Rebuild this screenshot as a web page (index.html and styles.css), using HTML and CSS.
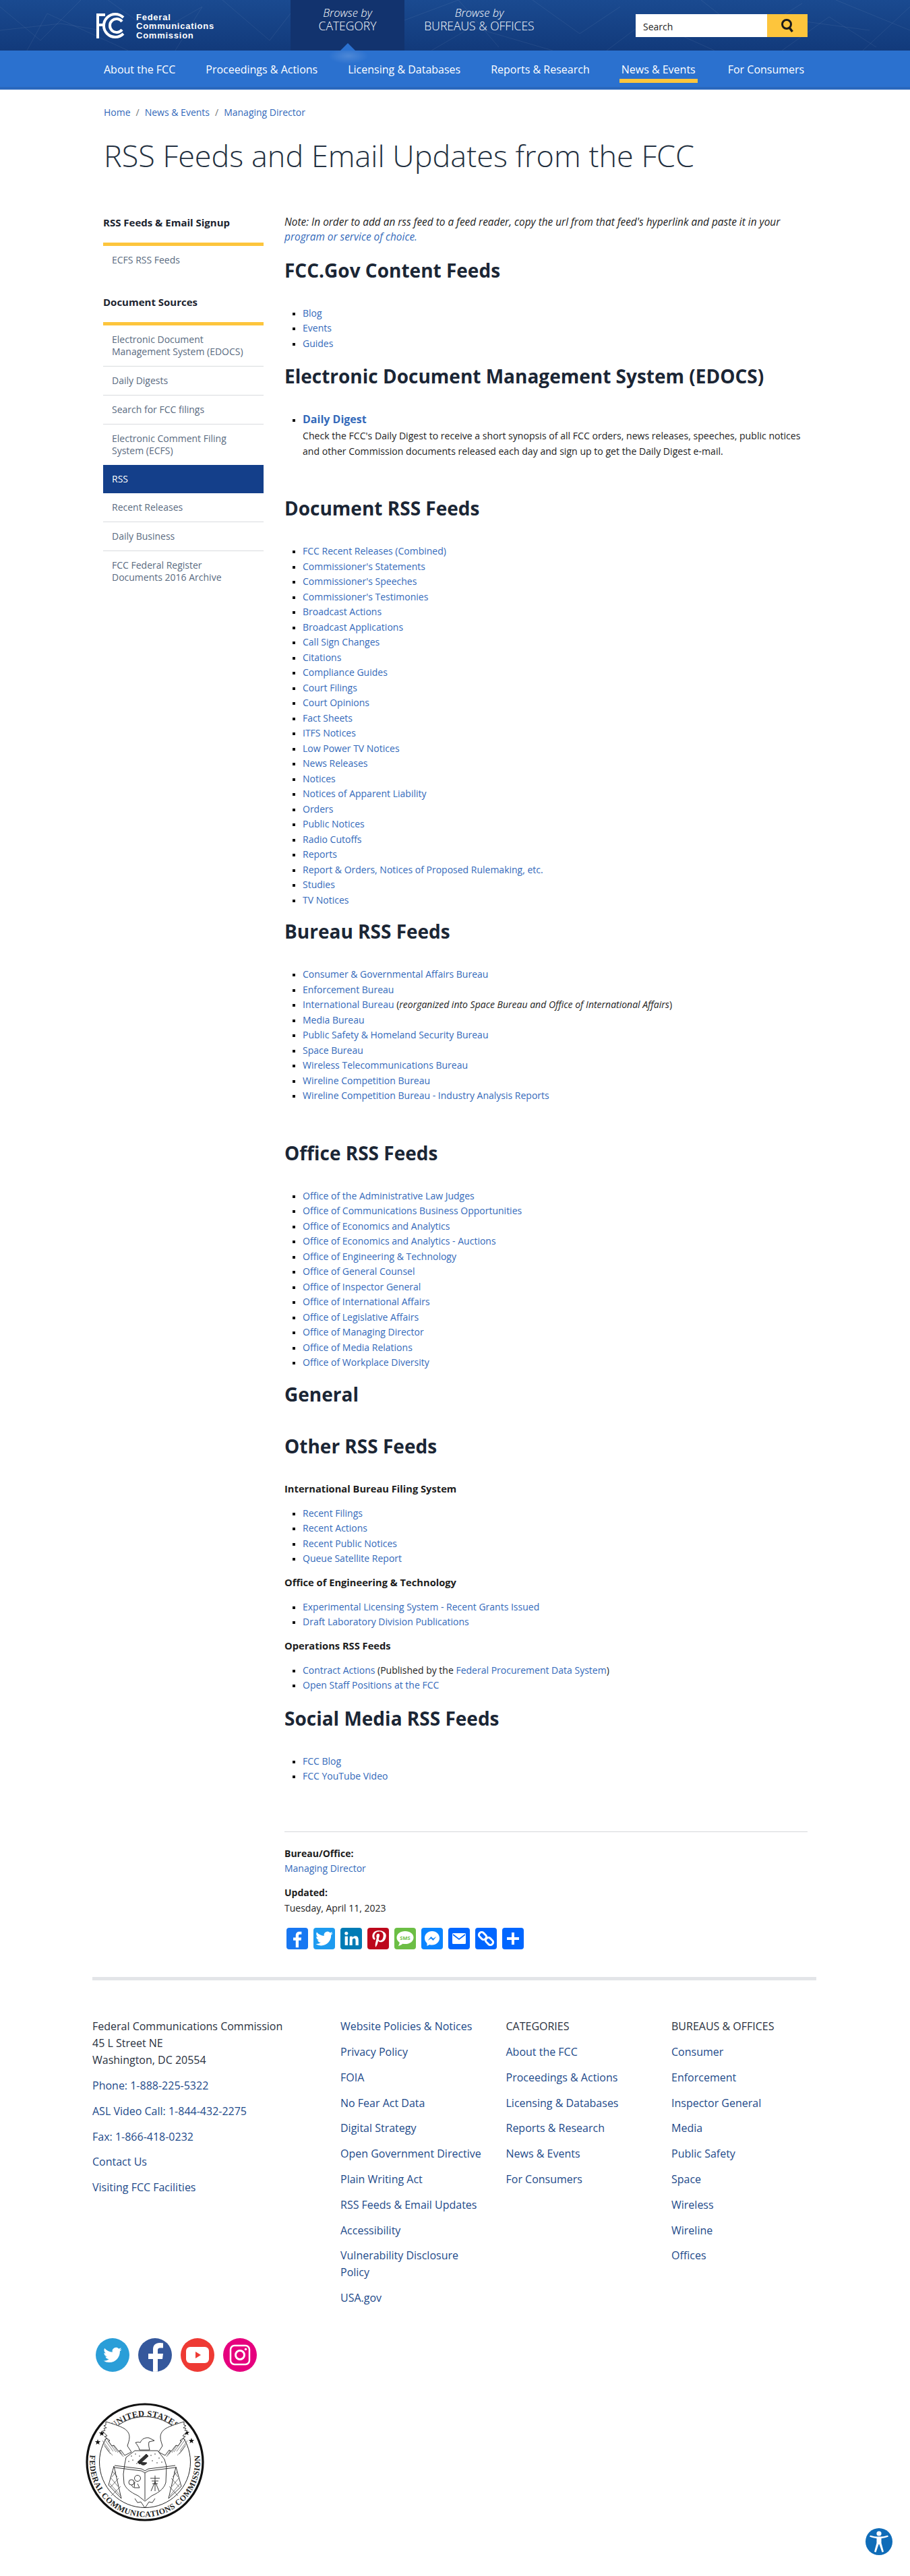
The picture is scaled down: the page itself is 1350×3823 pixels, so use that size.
FILE: index.html

```html
<!DOCTYPE html>
<html lang="en">
<head>
    <meta charset="UTF-8">
    <title>RSS Feeds and Email Updates from the FCC</title>
    <link rel="stylesheet" href="styles.css">
</head>
<body>

<svg class="defs" width="0" height="0">
    <symbol id="i-tw" viewBox="0 0 24 24"><path fill="#fff" d="M23.953 4.57a10 10 0 01-2.825.775 4.958 4.958 0 002.163-2.723c-.951.555-2.005.959-3.127 1.184a4.92 4.92 0 00-8.384 4.482C7.69 8.095 4.067 6.13 1.64 3.162a4.822 4.822 0 00-.666 2.475c0 1.71.87 3.213 2.188 4.096a4.904 4.904 0 01-2.228-.616v.06a4.923 4.923 0 003.946 4.827 4.996 4.996 0 01-2.212.085 4.936 4.936 0 004.604 3.417 9.867 9.867 0 01-6.102 2.105c-.39 0-.779-.023-1.17-.067a13.995 13.995 0 007.557 2.209c9.053 0 13.998-7.496 13.998-13.985 0-.21 0-.42-.015-.63A9.935 9.935 0 0024 4.59z"/></symbol>
</svg>

<header class="site-header">
    <svg class="mesh" viewBox="0 0 1350 75" preserveAspectRatio="none">
        <path d="M0 10L60 60L120 0M40 75L70 20L190 75M160 0L230 50L300 10L260 75M330 0L400 60L431 20M600 30L680 0L740 70M640 75L700 40L820 75M790 0L860 50L920 10M900 75L960 30L1060 75M1040 0L1110 55L1190 5M1160 75L1230 25L1300 70M1240 0L1350 45M1280 75L1350 10M0 45L90 35L180 50M1060 40L1180 30L1290 45"/>
    </svg>
    <div class="header-row">
        <a class="logo" href="#">
            <svg class="logo-mark" viewBox="0 0 46 38">
                <path d="M0 38V1H13V5H4V16H12V20H4V38z" fill="#fff"/>
                <path d="M40 7A17 17 0 1 0 40 31" fill="none" stroke="#fff" stroke-width="4"/>
                <path d="M38 13A10 10 0 1 0 38 25" fill="none" stroke="#fff" stroke-width="4"/>
            </svg>
            <span class="logo-text">Federal<br>Communications<br>Commission</span>
        </a>
        <a class="browse-tab active" href="#"><em>Browse by</em>CATEGORY</a>
        <a class="browse-tab" href="#"><em>Browse by</em>BUREAUS &amp; OFFICES</a>
        <form class="search">
            <input type="text" placeholder="Search">
            <button type="button" aria-label="Search">
                <svg width="22" height="22" viewBox="0 0 22 22"><circle cx="10" cy="9" r="6.5" fill="none" stroke="#1b1b1b" stroke-width="3"/><path d="M14 14L18.5 20" stroke="#1b1b1b" stroke-width="3.4"/></svg>
            </button>
        </form>
    </div>
</header>

<nav class="main-nav">
    <span class="nav-glow"></span>
    <a href="#">About the FCC</a>
    <a href="#">Proceedings &amp; Actions</a>
    <a href="#">Licensing &amp; Databases</a>
    <a href="#">Reports &amp; Research</a>
    <a href="#" class="current">News &amp; Events</a>
    <a href="#">For Consumers</a>
</nav>

<div class="breadcrumb"><a href="#">Home</a><i>/</i><a href="#">News &amp; Events</a><i>/</i><a href="#">Managing Director</a></div>
<h1>RSS Feeds and Email Updates from the FCC</h1>

<div class="columns">
    <aside class="sidebar">
        <h4>RSS Feeds &amp; Email Signup</h4>
        <ul class="side-menu first">
            <li><a href="#">ECFS RSS Feeds</a></li>
        </ul>
        <h4>Document Sources</h4>
        <ul class="side-menu">
            <li><a href="#">Electronic Document Management System (EDOCS)</a></li>
            <li><a href="#">Daily Digests</a></li>
            <li><a href="#">Search for FCC filings</a></li>
            <li class="plain"><a href="#">Electronic Comment Filing System (ECFS)</a></li>
            <li class="active"><a href="#">RSS</a></li>
            <li><a href="#">Recent Releases</a></li>
            <li><a href="#">Daily Business</a></li>
            <li class="plain"><a href="#">FCC Federal Register Documents 2016 Archive</a></li>
        </ul>
    </aside>

    <main class="content">
        <p class="note">Note: In order to add an rss feed to a feed reader, copy the url from that feed's hyperlink and paste it in your <a href="#">program or service of choice.</a></p>

        <h2>FCC.Gov Content Feeds</h2>
        <ul class="feeds">
            <li><a href="#">Blog</a></li>
            <li><a href="#">Events</a></li>
            <li><a href="#">Guides</a></li>
        </ul>

        <h2>Electronic Document Management System (EDOCS)</h2>
        <ul class="feeds digest">
            <li><a href="#" class="digest-link">Daily Digest</a>
                <p>Check the FCC's Daily Digest to receive a short synopsis of all FCC orders, news releases, speeches, public notices and other Commission documents released each day and sign up to get the Daily Digest e-mail.</p>
            </li>
        </ul>

        <h2 class="gap-xl">Document RSS Feeds</h2>
        <ul class="feeds">
            <li><a href="#">FCC Recent Releases (Combined)</a></li>
            <li><a href="#">Commissioner's Statements</a></li>
            <li><a href="#">Commissioner's Speeches</a></li>
            <li><a href="#">Commissioner's Testimonies</a></li>
            <li><a href="#">Broadcast Actions</a></li>
            <li><a href="#">Broadcast Applications</a></li>
            <li><a href="#">Call Sign Changes</a></li>
            <li><a href="#">Citations</a></li>
            <li><a href="#">Compliance Guides</a></li>
            <li><a href="#">Court Filings</a></li>
            <li><a href="#">Court Opinions</a></li>
            <li><a href="#">Fact Sheets</a></li>
            <li><a href="#">ITFS Notices</a></li>
            <li><a href="#">Low Power TV Notices</a></li>
            <li><a href="#">News Releases</a></li>
            <li><a href="#">Notices</a></li>
            <li><a href="#">Notices of Apparent Liability</a></li>
            <li><a href="#">Orders</a></li>
            <li><a href="#">Public Notices</a></li>
            <li><a href="#">Radio Cutoffs</a></li>
            <li><a href="#">Reports</a></li>
            <li><a href="#">Report &amp; Orders, Notices of Proposed Rulemaking, etc.</a></li>
            <li><a href="#">Studies</a></li>
            <li><a href="#">TV Notices</a></li>
        </ul>

        <h2 class="gap-s">Bureau RSS Feeds</h2>
        <ul class="feeds">
            <li><a href="#">Consumer &amp; Governmental Affairs Bureau</a></li>
            <li><a href="#">Enforcement Bureau</a></li>
            <li><a href="#">International Bureau</a> (<em>reorganized into Space Bureau and Office of International Affairs</em>)</li>
            <li><a href="#">Media Bureau</a></li>
            <li><a href="#">Public Safety &amp; Homeland Security Bureau</a></li>
            <li><a href="#">Space Bureau</a></li>
            <li><a href="#">Wireless Telecommunications Bureau</a></li>
            <li><a href="#">Wireline Competition Bureau</a></li>
            <li><a href="#">Wireline Competition Bureau - Industry Analysis Reports</a></li>
        </ul>

        <h2 class="gap-xl">Office RSS Feeds</h2>
        <ul class="feeds">
            <li><a href="#">Office of the Administrative Law Judges</a></li>
            <li><a href="#">Office of Communications Business Opportunities</a></li>
            <li><a href="#">Office of Economics and Analytics</a></li>
            <li><a href="#">Office of Economics and Analytics - Auctions</a></li>
            <li><a href="#">Office of Engineering &amp; Technology</a></li>
            <li><a href="#">Office of General Counsel</a></li>
            <li><a href="#">Office of Inspector General</a></li>
            <li><a href="#">Office of International Affairs</a></li>
            <li><a href="#">Office of Legislative Affairs</a></li>
            <li><a href="#">Office of Managing Director</a></li>
            <li><a href="#">Office of Media Relations</a></li>
            <li><a href="#">Office of Workplace Diversity</a></li>
        </ul>

        <h2 class="gap-s">General</h2>
        <h2 class="gap-l">Other RSS Feeds</h2>

        <h5 class="first-sub">International Bureau Filing System</h5>
        <ul class="feeds tight">
            <li><a href="#">Recent Filings</a></li>
            <li><a href="#">Recent Actions</a></li>
            <li><a href="#">Recent Public Notices</a></li>
            <li><a href="#">Queue Satellite Report</a></li>
        </ul>
        <h5>Office of Engineering &amp; Technology</h5>
        <ul class="feeds tight">
            <li><a href="#">Experimental Licensing System - Recent Grants Issued</a></li>
            <li><a href="#">Draft Laboratory Division Publications</a></li>
        </ul>
        <h5>Operations RSS Feeds</h5>
        <ul class="feeds tight">
            <li><a href="#">Contract Actions</a> (Published by the <a href="#">Federal Procurement Data System</a>)</li>
            <li><a href="#">Open Staff Positions at the FCC</a></li>
        </ul>

        <h2>Social Media RSS Feeds</h2>
        <ul class="feeds">
            <li><a href="#">FCC Blog</a></li>
            <li><a href="#">FCC YouTube Video</a></li>
        </ul>

        <div class="meta">
            <div class="meta-row"><strong>Bureau/Office:</strong><a href="#">Managing Director</a></div>
            <div class="meta-row"><strong>Updated:</strong><span>Tuesday, April 11, 2023</span></div>
            <div class="share">
                <a href="#" class="s-fb"><svg viewBox="0 0 24 24"><path fill="#fff" d="M13.5 22v-8h2.7l.4-3.2h-3.1V8.8c0-.9.3-1.5 1.6-1.5h1.7V4.4c-.3 0-1.3-.1-2.4-.1-2.4 0-4.1 1.5-4.1 4.2v2.3H7.5V14h2.8v8z"/></svg></a>
                <a href="#" class="s-tw"><svg viewBox="0 0 30 30"><use href="#i-tw" x="3" y="3" width="24" height="24"/></svg></a>
                <a href="#" class="s-li"><svg viewBox="0 0 24 24"><g fill="#fff"><rect x="5" y="9.5" width="3.2" height="10"/><circle cx="6.6" cy="6.2" r="1.9"/><path d="M10.4 9.5h3v1.4c.5-.9 1.6-1.7 3.1-1.7 3 0 3.6 2 3.6 4.6v5.7h-3.2v-5c0-1.2 0-2.700-1.700-2.700s-1.900 1.300-1.900 2.600v5.100h-3.200z"/></g></svg></a>
                <a href="#" class="s-pi"><svg viewBox="0 0 24 24"><path fill="#fff" d="M12.500 3C8 3 5.500 6 5.500 9.200c0 1.900.7 3.600 2.300 4.200.3.1.5 0 .6-.3l.3-.9c.1-.3 0-.4-.2-.6-.4-.6-.7-1.200-.7-2.200 0-2.800 2.100-5.200 5.400-5.200 3 0 4.600 1.800 4.600 4.200 0 3.200-1.400 5.800-3.500 5.800-1.100 0-2-1-1.700-2.100.3-1.400 1-2.900 1-3.900 0-.9-.5-1.700-1.500-1.700-1.200 0-2.100 1.200-2.100 2.900 0 1 .4 1.700.4 1.700l-1.400 6c-.4 1.800-.1 3.900 0 4.100 0 .1.2.2.3.1.1-.2 1.500-1.900 2-3.700l.8-3c.4.7 1.500 1.400 2.700 1.400 3.600 0 6-3.300 6-7.600C20.800 5.600 17.300 3 12.500 3z"/></svg></a>
                <a href="#" class="s-sm"><svg viewBox="0 0 32 32"><path fill="#fff" d="M16 5C9 5 3.500 9 3.500 14.500c0 3 1.600 5.500 4.200 7.200 0 1.700-.7 3.400-2 5 2.500-.3 4.700-1.300 6.500-3 1.200.3 2.500.4 3.800.4 7 0 12.500-4 12.500-9.600S23 5 16 5z"/><text x="16" y="17.500" class="sms-text">SMS</text></svg></a>
                <a href="#" class="s-me"><svg viewBox="0 0 32 32"><path fill="#fff" d="M16 5C9.700 5 5 9.500 5 15.300c0 3.100 1.300 5.800 3.500 7.600v4l3.700-2c1.200.4 2.500.6 3.800.6 6.300 0 11-4.500 11-10.200S22.300 5 16 5z"/><path fill="#1083f5" d="M9.500 19l5-6 3 3 5-3-5 6-3-3z"/></svg></a>
                <a href="#" class="s-em"><svg viewBox="0 0 32 32"><rect x="6" y="8" width="20" height="16" rx="1.500" fill="#fff"/><path d="M7 10l9 7 9-7" fill="none" stroke="#0166ff" stroke-width="1.600"/></svg></a>
                <a href="#" class="s-em"><svg viewBox="0 0 32 32"><g fill="none" stroke="#fff" stroke-width="3"><rect x="5" y="8" width="12" height="8" rx="3.500" transform="rotate(45 11 12)"/><rect x="15" y="16" width="12" height="8" rx="3.500" transform="rotate(45 21 20)"/></g></svg></a>
                <a href="#" class="s-em"><svg viewBox="0 0 32 32"><path fill="#fff" d="M14 7h4v7h7v4h-7v7h-4v-7H7v-4h7z"/></svg></a>
            </div>
        </div>
    </main>
</div>

<footer class="site-footer">
    <div class="footer-cols">
        <div class="fcol address">
            <p class="fgroup">Federal Communications Commission<br>45 L Street NE<br>Washington, DC 20554</p>
            <a href="#">Phone: 1-888-225-5322</a>
            <a href="#">ASL Video Call: 1-844-432-2275</a>
            <a href="#">Fax: 1-866-418-0232</a>
            <a href="#">Contact Us</a>
            <a href="#">Visiting FCC Facilities</a>
        </div>
        <div class="fcol policies">
            <a href="#">Website Policies &amp; Notices</a>
            <a href="#">Privacy Policy</a>
            <a href="#">FOIA</a>
            <a href="#">No Fear Act Data</a>
            <a href="#">Digital Strategy</a>
            <a href="#">Open Government Directive</a>
            <a href="#">Plain Writing Act</a>
            <a href="#">RSS Feeds &amp; Email Updates</a>
            <a href="#">Accessibility</a>
            <a href="#">Vulnerability Disclosure Policy</a>
            <a href="#">USA.gov</a>
        </div>
        <div class="fcol">
            <span class="ftitle">CATEGORIES</span>
            <a href="#">About the FCC</a>
            <a href="#">Proceedings &amp; Actions</a>
            <a href="#">Licensing &amp; Databases</a>
            <a href="#">Reports &amp; Research</a>
            <a href="#">News &amp; Events</a>
            <a href="#">For Consumers</a>
        </div>
        <div class="fcol last">
            <span class="ftitle">BUREAUS &amp; OFFICES</span>
            <a href="#">Consumer</a>
            <a href="#">Enforcement</a>
            <a href="#">Inspector General</a>
            <a href="#">Media</a>
            <a href="#">Public Safety</a>
            <a href="#">Space</a>
            <a href="#">Wireless</a>
            <a href="#">Wireline</a>
            <a href="#">Offices</a>
        </div>
    </div>

    <div class="social">
        <a href="#" class="c-tw"><svg viewBox="0 0 44 44"><use href="#i-tw" x="10" y="10" width="24" height="24"/></svg></a>
        <a href="#" class="c-fb"><svg viewBox="0 0 50 50"><path fill="#fff" d="M29 50V31h7l1-8h-8v-5c0-2.300 1-3.500 3.500-3.500H37V7.500c-1-.2-3-.4-5.500-.4-5.500 0-9.500 3.400-9.500 9.700V23h-7v8h7v19z"/></svg></a>
        <a href="#" class="c-yt"><svg viewBox="0 0 50 50"><rect x="8" y="13" width="34" height="24" rx="6" fill="#fff"/><path d="M22 20l8 5-8 5z" fill="#ee3a34"/></svg></a>
        <a href="#" class="c-ig"><svg viewBox="0 0 50 50"><g fill="none" stroke="#fff"><rect x="11" y="11" width="28" height="28" rx="6" stroke-width="2.500"/><circle cx="25" cy="25" r="6.500" stroke-width="3"/></g><circle cx="33.500" cy="16.500" r="1.800" fill="#fff"/></svg></a>
    </div>

    <svg class="seal" viewBox="0 0 176 176">
        <defs>
            <path id="arc-upper" d="M26 60A68 68 0 0 1 150 60"/>
            <path id="arc-lower" d="M10 62A82 82 0 1 0 166 62"/>
        </defs>
        <circle cx="88" cy="88" r="86" fill="#fff" stroke="#111" stroke-width="3.200"/>
        <circle cx="88" cy="88" r="67.500" fill="none" stroke="#222" stroke-width="1"/>
        <text class="seal-top"><textPath href="#arc-upper" startOffset="50%">UNITED STATES</textPath></text>
        <text class="seal-bottom"><textPath href="#arc-lower" startOffset="50%">FEDERAL COMMUNICATIONS COMMISSION</textPath></text>
        <g class="seal-stars">
            <path d="M24 41l1 3 3.200.1-2.500 1.900.9 3-2.600-1.800-2.600 1.800.9-3-2.500-1.900 3.200-.1z"/>
            <path d="M18 54l1 3 3.200.1-2.500 1.900.9 3-2.600-1.800-2.600 1.800.9-3-2.500-1.900 3.200-.1z"/>
            <path d="M150 40l1 3 3.200.1-2.500 1.900.9 3-2.600-1.800-2.600 1.800.9-3-2.500-1.900 3.200-.1z"/>
            <path d="M157 52l1 3 3.200.1-2.500 1.900.9 3-2.600-1.800-2.600 1.800.9-3-2.500-1.900 3.200-.1z"/>
        </g>
        <g class="seal-hatch">
            <path d="M25 56l11 15M28 54l13 18M31 53l14 20M35 54l13 20M38 55l14 21M42 58l12 20M26 60l9 13M28 64l9 12M31 68l9 10M45 62l11 18"/>
            <path d="M151 56l-11 15M148 54l-13 18M145 53l-14 20M141 54l-13 20M138 55l-14 21M134 58l-12 20M150 60l-9 13M148 64l-9 12M145 68l-9 10M131 62l-11 18"/>
        </g>
        <g class="seal-draw">
            <path fill="#fff" d="M30 28c10 3 20 6 27 10 6 4 8 8 8 13 0 5-2 9-3 13l6 9-10 5-6-8-3 2-7-9-3 1-5-7 2-1-8-6 4-1-7-7 4-1-2-3 4-1-4-3 3-1z"/>
            <path fill="#fff" d="M146 28c-10 3-20 6-27 10-6 4-8 8-8 13 0 5 2 9 3 13l-6 9 10 5 6-8 3 2 7-9 3 1 5-7-2-1 8-6-4-1 7-7-4-1 2-3-4-1 4-3-3-1z"/>
            <path fill="#fff" d="M80 70c-1-5-4-8-6-11 3-1 5-1 7 0 2-5 7-8 13-7l8 4-8 2c-1 4 0 8 1 12z"/>
            <path fill="#fff" d="M60 81l13-10h34l10 13 3 10-1 24c-2 8-8 13-15 17l-6 3-10 8-10-8-6-3c-7-4-12-8-15-15l-1-14 2-15z"/>
            <path d="M43 96l40 5 5 3 5-3 40-5M43 93l40 5 5 3 5-3 40-5M88 104v40"/>
            <path fill="#fff" d="M42 94l-8 28 19 20zM134 95l8 29-19 18z"/>
            <path class="thin" d="M40 102l7 8M45 102l-6 8M37 111l11 13M49 112l-12 13M36 120l16 18M52 124l-14 14M136 102l-7 8M131 102l6 8M139 111l-11 13M127 112l12 13M140 120l-15 18M124 124l13 14"/>
            <path d="M103 131V108M97 131l6-14 6 14M96 112h14M98 116h10M99 120h8" />
            <circle cx="68" cy="118" r="4"/><circle cx="77" cy="112" r="4.500"/>
            <path d="M73 117l-1 9h8l-3-6M68 122l3 4"/>
            <path class="solid" d="M77 88l13-12 3 3-13 12z"/>
            <path class="solid" d="M80 88c2 5 8 6 11 1z"/>
            <path d="M73 142l4 6 5-1 6 9 6-9 5 1 4-6"/>
        </g>
        <g class="seal-dots">
            <circle cx="68" cy="79" r=".8"/><circle cx="74" cy="76" r=".8"/><circle cx="80" cy="79" r=".8"/><circle cx="64" cy="87" r=".8"/><circle cx="70" cy="85" r=".8"/><circle cx="76" cy="90" r=".8"/><circle cx="97" cy="78" r=".8"/><circle cx="103" cy="76" r=".8"/><circle cx="109" cy="82" r=".8"/><circle cx="99" cy="86" r=".8"/><circle cx="106" cy="89" r=".8"/><circle cx="113" cy="88" r=".8"/>
        </g>
    </svg>
</footer>

<a class="a11y" href="#" aria-label="Accessibility">
    <svg width="40" height="40" viewBox="0 0 40 40"><circle cx="20" cy="20" r="20" fill="#0f6cb8"/><circle cx="20" cy="8" r="3.600" fill="#fff"/><path fill="#fff" d="M6 12.500l1-1.800c4 1.200 8 1.900 13 1.900s9-.7 13-1.900l1 1.800c-3.500 1.500-7 2.200-10.500 2.700V22l3.500 13-2.500.8L20.500 24h-1L15.500 35.800 13 35l3.500-13v-6.800C13 14.700 9.500 14 6 12.500z"/></svg>
</a>

</body>
</html>
```

FILE: styles.css

```css
* { box-sizing: border-box; }
body { margin: 0; font-family: "Open Sans", sans-serif; font-size: 14px; line-height: 22.4px; color: #1c1c1c; background: #fff; }
a { color: #3369ba; text-decoration: none; }
.defs { position: absolute; }

/* header */
.site-header { position: relative; height: 75px; background: linear-gradient(#1a4a90, #123a7b); overflow: hidden; }
.mesh { position: absolute; left: 0; top: 0; width: 100%; height: 100%; fill: none; stroke: rgba(255,255,255,.07); stroke-width: 1; }
.header-row { position: relative; display: flex; height: 75px; padding-left: 143px; }
.logo { display: flex; width: 288px; padding-top: 19px; color: #fff; }
.logo-mark { width: 46px; height: 38px; margin-right: 13px; }
.logo-text { font-family: "Liberation Sans", sans-serif; font-weight: 700; font-size: 13px; line-height: 13.4px; letter-spacing: .75px; }
.browse-tab { width: 169px; padding-top: 9px; text-align: center; color: #fff; font-size: 17.5px; line-height: 19px; font-weight: 300; }
.browse-tab em { display: block; font-size: 16.5px; line-height: 20px; }
.browse-tab.active { background: #12336e; width: 169px; position: relative; }
.browse-tab.active::after { content: ""; position: absolute; left: 74px; bottom: 0; border: 11px solid transparent; border-top: 0; border-bottom-color: #2b71cf; }
.browse-tab + .browse-tab { width: 222px; }
.search { display: flex; height: 34px; margin: 21px 0 0 121px; }
.search input { width: 195px; height: 34px; border: 0; padding: 2px 11px 0; font: 14px "Open Sans", sans-serif; background: #fff; }
.search input::placeholder { color: #222; opacity: 1; }
.search button { width: 60px; height: 34px; border: 0; padding: 0; background: #fdc53c; display: flex; align-items: center; justify-content: center; }

.main-nav { position: relative; display: flex; height: 58px; padding-left: 154px; background: #2b71cf; border-bottom: 4px solid #2a68bd; }
.main-nav a { position: relative; margin-right: 45px; padding-top: 15px; color: #fff; font-size: 16px; line-height: 26px; font-weight: 400; white-space: nowrap; }
.main-nav a.current { margin-left: 2px; margin-right: 48px; }
.main-nav a.current::after { content: ""; position: absolute; left: -3px; right: -3px; top: 42px; height: 6px; background: #fdc53c; }
.nav-glow { position: absolute; left: 487px; top: 0; width: 60px; height: 20px; background: radial-gradient(ellipse at 50% 40%, rgba(255,255,255,.16), rgba(255,255,255,0) 70%); }

.breadcrumb { padding: 23px 0 0 154px; font-size: 14px; line-height: 22px; }
.breadcrumb i { margin: 0 8px; font-style: normal; color: #777; }
h1 { margin: 22px 0 0 154px; font-size: 45px; line-height: 62px; font-weight: 300; color: #233040; }

/* two columns */
.columns { display: flex; padding: 57px 152px 0 153px; }
.sidebar { width: 238px; flex: none; margin-right: 31px; }
.sidebar h4 { margin: 0; height: 41px; font-size: 15px; line-height: 22px; font-weight: 700; color: #1c2430; }
.side-menu { list-style: none; margin: 0 0 35px; padding: 0; border-top: 5px solid #fdc53c; }
.side-menu.first { margin-bottom: 30px; }
.side-menu li { border-bottom: 1px solid #d9dbde; }
.side-menu li.plain, .side-menu.first li { border-bottom: 0; }
.side-menu a { display: block; padding: 12px 13px; line-height: 18px; color: #596a80; }
.side-menu li.active { background: #143f8a; border-bottom: 0; }
.side-menu li.active a { color: #fff; }

.content { flex: 1; min-width: 0; }
.note { margin: 0; font-size: 15.4px; font-style: italic; }
h2 { margin: 20px 0 0; font-size: 28px; line-height: 34px; font-weight: 700; color: #1b2635; }
h2.gap-xl { margin-top: 56px; }
h2.gap-l { margin-top: 43px; }
h2.gap-s { margin-top: 18px; }
h5 { margin: 12px 0 0; font-size: 14.7px; line-height: 22px; font-weight: 700; }
h5.first-sub { margin-top: 35px; }
.feeds { list-style: square; margin: 36px 0 0; padding: 0 0 0 27px; }
.feeds li { line-height: 22.5px; }
.feeds.tight { margin-top: 15px; }
.feeds li::marker { color: #111; font-size: 12px; }
.digest { margin-top: 36px; }
.digest-link { font-size: 16px; font-weight: 700; line-height: 22px; display: block; }
.digest p { margin: 3px 0 0; font-size: 14.1px; line-height: 22.4px; }

.meta { margin-top: 70px; padding-top: 21px; border-top: 1px solid #d5d7da; }
.meta-row { margin-bottom: 14px; }
.meta-row strong, .meta-row a, .meta-row span { display: block; }
.meta-row strong { font-weight: 700; }
.meta-row span { color: #222; }
.share { display: flex; gap: 8px; margin: 18px 0 0 3px; }
.share a { display: block; width: 32px; height: 32px; border-radius: 4px; }
.share svg { display: block; width: 32px; height: 32px; }
.s-fb { background: #1877f2; }
.s-tw { background: #1d9bf0; }
.s-li { background: #007bb5; }
.s-pi { background: #bd081c; }
.s-sm { background: #6cbe45; }
.s-me { background: #0a84ff; }
.s-em { background: #0166ff; }
.sms-text { font: 700 7.500px "Open Sans", sans-serif; fill: #6cbe45; text-anchor: middle; }

/* footer */
.site-footer { margin: 41px 139px 0 137px; border-top: 5px solid #e3e5e8; padding-top: 56px; }
.footer-cols { display: flex; font-size: 16px; line-height: 25px; }
.fcol { flex: none; width: 245.500px; padding-right: 20px; }
.fcol.address { width: 368px; }
.fcol.policies { padding-right: 30px; }
.fcol.last { width: 215px; }
.fcol a, .ftitle { display: block; margin-bottom: 12.800px; color: #1d4a8a; }
.ftitle { color: #2a3140; }
.fgroup { margin: 0 0 12.800px; color: #2a3140; }
.social { display: flex; gap: 13px; margin: 34px 0 0 5px; }
.social a { display: block; width: 50px; height: 50px; border-radius: 50%; overflow: hidden; }
.social svg { display: block; width: 50px; height: 50px; }
.c-tw { background: #2a9ed8; }
.c-fb { background: #35589c; }
.c-yt { background: #ee3a34; }
.c-ig { background: #e6007e; }
.seal { display: block; width: 176px; height: 176px; margin: 46px 0 0 -10px; }
.seal-top { font: 700 12.500px "Liberation Serif", serif; letter-spacing: .3px; text-anchor: middle; fill: #222; }
.seal-bottom { font: 700 12px "Liberation Serif", serif; letter-spacing: .5px; text-anchor: middle; fill: #222; }
.seal-stars { fill: #111; }
.seal-hatch { fill: none; stroke: #555; stroke-width: .7; }
.seal-draw { fill: none; stroke: #222; stroke-width: .9; }
.seal-draw .thin { stroke-width: .6; }
.seal-draw .solid { fill: #333; }
.seal-dots { fill: #333; }
.a11y { position: fixed; right: 26px; bottom: 31px; width: 40px; height: 40px; }
.a11y svg { display: block; }
```
